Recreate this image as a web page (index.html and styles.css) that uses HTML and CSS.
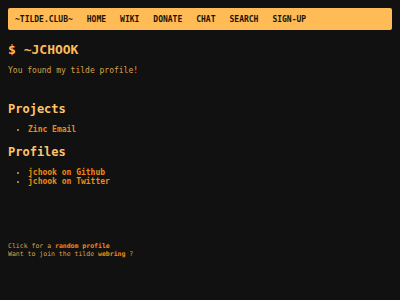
FILE: index.html
```html
<!DOCTYPE html>
<html>
<head>
<meta charset="utf-8">
<link rel="stylesheet" href="styles.css">
</head>
<body>
<nav class="nav">
  <a class="brand" href="#">~TILDE.CLUB~</a>
  <a href="#">HOME</a>
  <a href="#">WIKI</a>
  <a href="#">DONATE</a>
  <a href="#">CHAT</a>
  <a href="#">SEARCH</a>
  <a href="#">SIGN-UP</a>
</nav>
<main class="main">
  <h1 class="title">$ ~JCHOOK</h1>
  <p class="intro">You found my tilde profile!</p>
  <h2 class="section section-first">Projects</h2>
  <ul class="list">
    <li><a href="#">Zinc Email</a></li>
  </ul>
  <h2 class="section">Profiles</h2>
  <ul class="list">
    <li><a href="#">jchook on Github</a></li>
    <li><a href="#">jchook on Twitter</a></li>
  </ul>
</main>
<footer class="foot">
  <div>Click for a <a href="#">random profile</a></div>
  <div>Want to join the tilde <a href="#">webring</a> ?</div>
</footer>
</body>
</html>
```

FILE: styles.css
```css
html, body {
  background: #111111;
}
body {
  margin: 8px;
  font-family: "DejaVu Sans Mono", "Liberation Mono", monospace;
  color: #d9a24c;
}
a {
  text-decoration: none;
  color: #ef8a12;
  font-weight: bold;
}
.nav {
  display: flex;
  align-items: center;
  background: #ffbb55;
  border-radius: 2px;
  height: 22px;
  padding: 0 7px;
  font-size: 8px;
}
.nav a {
  color: #1a1408;
  margin-right: 14px;
}
.title {
  font-size: 13px;
  color: #ffbb55;
  margin: 12px 0 0 0;
  line-height: 16px;
}
.intro {
  font-size: 8px;
  margin: 8px 0 0 0;
  line-height: 10px;
}
.section {
  font-size: 12px;
  color: #ffc46a;
  margin: 11px 0 0 0;
  line-height: 14px;
}
.section-first {
  margin-top: 26px;
}
.list {
  font-size: 8px;
  margin: 9px 0 0 0;
  padding-left: 20px;
  line-height: 9px;
}
.list li::marker {
  color: #d9a24c;
}
.foot {
  margin-top: 56px;
  font-size: 6.5px;
  line-height: 8px;
}
```
